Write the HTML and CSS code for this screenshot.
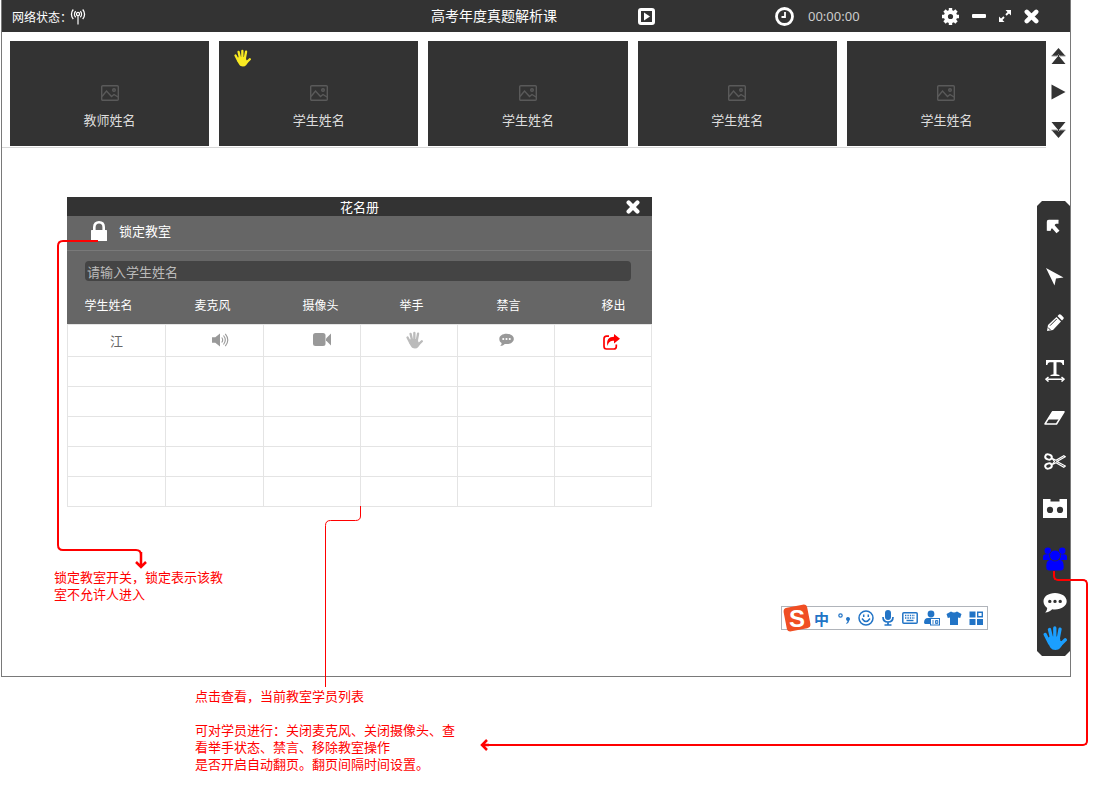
FILE: index.html
```html
<!DOCTYPE html>
<html lang="zh-CN">
<head>
<meta charset="utf-8">
<meta name="viewport" content="width=device-width, initial-scale=1">
<title>高考年度真题解析课</title>
<link rel="stylesheet" href="styles.css">
</head>
<body>
<svg class="sprite" aria-hidden="true">
  <symbol id="picture" viewBox="0 0 18 16">
    <g fill="none" stroke="currentColor" stroke-width="1.4">
      <rect x=".7" y=".7" width="16.6" height="14.6" rx="1"/>
      <path d="M1 11.5 5.5 6l5 5.5 2.5-2 4 2.5"/>
      <circle cx="13" cy="5" r="1.3"/>
    </g>
  </symbol>
  <symbol id="hand" viewBox="0 0 24 24">
    <path d="M2.200 8.500 6.500 17M6.500 3.500 9 14M11.800 2v12M17 3.200 15 14M22.300 13.800 17 19" fill="none" stroke="currentColor" stroke-width="3.300" stroke-linecap="round"/>
    <path d="M4 12.500 7 10.500h9.700l.8 4.500 2.700.500C19 21 16.500 24 12.500 24 8 24 6 21 4 12.500z" fill="currentColor"/>
  </symbol>
  <symbol id="cross" viewBox="0 0 14 14">
    <path d="M2.600 2.600l8.800 8.800M11.400 2.600l-8.800 8.800" stroke="currentColor" stroke-width="4.200" stroke-linecap="round"/>
  </symbol>
  <symbol id="speech" viewBox="0 0 24 20">
    <path fill="currentColor" fill-rule="evenodd" d="M12 0c6.600 0 11.700 3.600 11.700 8.200S18.600 16.400 12 16.400c-1 0-1.900 0-2.800-.2C7.500 18.200 5 19.200 2 19.600c1.300-1.200 2-2.500 2.200-4.700C1.800 13.300.500 11 .500 8.200.500 3.600 5.400 0 12 0zM6.800 6.700a1.700 1.700 0 1 0 0 3.400 1.700 1.700 0 0 0 0-3.400zm5.200 0a1.700 1.700 0 1 0 0 3.400 1.700 1.700 0 0 0 0-3.400zm5.200 0a1.700 1.700 0 1 0 0 3.400 1.700 1.700 0 0 0 0-3.400z"/>
  </symbol>
</svg>

<div class="page">
  <main class="board">
    <header class="topbar">
      <div class="status">网络状态：<svg class="signal" width="16" height="17" viewBox="0 0 16 17" fill="none" stroke="currentColor" stroke-width="1.300"><path d="M3.300 1.500a7 7 0 0 0 0 9.500M12.700 1.500a7 7 0 0 1 0 9.500M5.700 3.200a4.300 4.300 0 0 0 0 6M10.300 3.200a4.300 4.300 0 0 1 0 6"/><circle cx="8" cy="6" r="1.600"/><path d="M8 8v8.500" stroke="#aaa" stroke-width="2"/></svg></div>
      <h1 class="title">高考年度真题解析课</h1>
      <div class="playback"><button class="plain" type="button" aria-label="播放"><svg width="17" height="17" viewBox="0 0 17 17"><rect x="1.500" y="1.500" width="14" height="14" rx="1.500" fill="none" stroke="currentColor" stroke-width="3"/><path d="M6 4.500v8l6-4z" fill="currentColor"/></svg></button></div>
      <div class="clock-area">
        <div class="clock"><svg width="19" height="19" viewBox="0 0 19 19" fill="none" stroke="currentColor"><circle cx="9.500" cy="9.500" r="8" stroke-width="2.800"/><path d="M10 5v5H6.500" stroke-width="1.800"/></svg><time>00:00:00</time></div>
        <div class="window-controls">
          <button class="plain" type="button" aria-label="设置"><svg width="17" height="17" viewBox="0 0 17 17" fill="none" stroke="currentColor"><circle cx="8.500" cy="8.500" r="4.600" stroke-width="4"/><path d="M8.500 0v3M8.500 14v3M0 8.500h3M14 8.500h3M2.500 2.500l2.200 2.200M12.300 12.300l2.200 2.200M14.500 2.500l-2.200 2.200M4.700 12.300l-2.200 2.200" stroke-width="3.400"/></svg></button>
          <button class="plain" type="button" aria-label="最小化"><svg width="14" height="14" viewBox="0 0 14 14"><rect y="5" width="14" height="4" rx="1" fill="currentColor"/></svg></button>
          <button class="plain" type="button" aria-label="最大化"><svg width="12" height="12" viewBox="0 0 12 12"><path d="M6.500 0H12v5.500zM0 6.500V12h5.500z" fill="currentColor"/><path d="M10 2 7 5M5 7l-3 3" stroke="currentColor" stroke-width="1.800"/></svg></button>
          <button class="plain" type="button" aria-label="关闭"><svg width="15" height="15"><use href="#cross"/></svg></button>
        </div>
      </div>
    </header>

    <section class="strip">
      <ul class="videos">
        <li class="video"><svg class="thumb"><use href="#picture"/></svg><span>教师姓名</span></li>
        <li class="video"><svg class="raised"><use href="#hand"/></svg><svg class="thumb"><use href="#picture"/></svg><span>学生姓名</span></li>
        <li class="video"><svg class="thumb"><use href="#picture"/></svg><span>学生姓名</span></li>
        <li class="video"><svg class="thumb"><use href="#picture"/></svg><span>学生姓名</span></li>
        <li class="video"><svg class="thumb"><use href="#picture"/></svg><span>学生姓名</span></li>
      </ul>
      <nav class="pager">
        <button class="plain" type="button" aria-label="上一页"><svg width="15" height="16" viewBox="0 0 15 16" fill="currentColor"><path d="M7.500 0 14.500 8H.500zM7.500 7.500 14.500 16H.500z"/><path d="M.500 8H6l1.500-1.500L9 8h5.500" fill="none" stroke="#999"/></svg></button>
        <button class="plain" type="button" aria-label="自动翻页"><svg width="15" height="16" viewBox="0 0 15 16" fill="currentColor"><path d="M.500.500v15l14-7.500z"/></svg></button>
        <button class="plain" type="button" aria-label="下一页"><svg width="15" height="16" viewBox="0 0 15 16" fill="currentColor"><path d="M.500 0h14l-7 8.500zM.500 8h14l-7 8z"/><path d="M.500 8H6l1.500 1.500L9 8h5.500" fill="none" stroke="#999"/></svg></button>
      </nav>
    </section>

    <div class="stage">
      <div class="content">
        <section class="roster">
          <header class="roster-title"><h2>花名册</h2><button class="plain" type="button" aria-label="关闭花名册"><svg width="14" height="14"><use href="#cross"/></svg></button></header>
          <button class="lock" type="button"><svg width="16" height="20" viewBox="0 0 16 20"><path d="M3.300 10V6.200C3.300 3 5.300 1.300 8 1.300s4.700 1.700 4.700 4.900V10" fill="none" stroke="currentColor" stroke-width="2.600"/><rect y="9" width="16" height="11" rx=".500" fill="currentColor"/></svg>锁定教室</button>
          <div class="search"><input type="text" aria-label="学生姓名" placeholder="请输入学生姓名"></div>
          <table>
            <colgroup><col class="wide"><col class="wide"><col><col><col><col></colgroup>
            <thead><tr><th class="name">学生姓名</th><th class="mic">麦克风</th><th>摄像头</th><th>举手</th><th>禁言</th><th class="remove">移出</th></tr></thead>
            <tbody>
              <tr class="student">
                <td>江</td>
                <td><button class="plain sound" type="button" aria-label="麦克风"><svg width="17" height="14" viewBox="0 0 17 14"><path d="M0 4.300h3.300L8 .500v13L3.300 9.700H0z" fill="currentColor"/><path d="M9.700 4.500q2 2.500 0 5M11.500 2.500q3.600 4.500 0 9M13.300.800q5 6.200 0 12.400" fill="none" stroke="currentColor" stroke-width="1.100"/></svg></button></td>
                <td><button class="plain camera" type="button" aria-label="摄像头"><svg width="18" height="14" viewBox="0 0 18 14" fill="currentColor"><rect width="12.500" height="13" rx="2.500"/><path d="M13 5.500 18 .500v12l-5-5z"/></svg></button></td>
                <td><button class="plain hand" type="button" aria-label="举手"><svg width="17" height="18"><use href="#hand"/></svg></button></td>
                <td><button class="plain" type="button" aria-label="禁言"><svg width="15" height="14"><use href="#speech"/></svg></button></td>
                <td><button class="plain kick" type="button" aria-label="移出"><svg width="17" height="16" viewBox="0 0 17 16"><path d="M6 2.200H3.500Q1 2.200 1 4.700v7.600Q1 15 3.500 15h7.300q2.500 0 2.500-2.500v-2" fill="none" stroke="currentColor" stroke-width="1.700"/><path d="M11 0l6 4.700-6 4.700V6.700C7.500 6.700 5.500 8 4.500 12 3 6 6 2.800 11 2.800z" fill="currentColor"/></svg></button></td>
              </tr>
              <tr><td></td><td></td><td></td><td></td><td></td><td></td></tr>
              <tr><td></td><td></td><td></td><td></td><td></td><td></td></tr>
              <tr><td></td><td></td><td></td><td></td><td></td><td></td></tr>
              <tr><td></td><td></td><td></td><td></td><td></td><td></td></tr>
              <tr><td></td><td></td><td></td><td></td><td></td><td></td></tr>
            </tbody>
          </table>
        </section>
        <p class="note lock-note">锁定教室开关，锁定表示该教<br>室不允许人进入</p>
      </div>

      <nav class="tools">
        <button class="plain" type="button" aria-label="选择"><svg width="18" height="16" viewBox="0 0 18 16"><path d="M1.500 1.500h11L4 11.500H1.500z" fill="currentColor"/><path d="M12.500 2.800H2.800v9M4.500 4.500 12 13" fill="none" stroke="currentColor" stroke-width="4" stroke-linejoin="round"/></svg></button>
        <button class="plain" type="button" aria-label="指针"><svg width="19" height="19" viewBox="0 0 19 19"><path d="M1 1l17.500 9.500-7.500 1L9.500 18.500z" fill="currentColor"/></svg></button>
        <button class="plain" type="button" aria-label="画笔"><svg width="18" height="18" viewBox="0 0 18 18"><path d="M1 17l1-6L10.500 3 15 7.500 7 16z" fill="currentColor"/><path d="M11.500 2 13 .500q1-.700 2 .300l2.200 2.200q1 1 .200 2L16 6.500z" fill="currentColor"/><path d="M4 11.700 10.700 5M2 13.500 4.500 16" stroke="#333"/></svg></button>
        <button class="plain" type="button" aria-label="文字"><svg width="20" height="22" viewBox="0 0 20 22"><path d="M1 0h18v5h-1.300q-.300-2.700-2.400-2.700h-3.800v12l3 .700v1h-9v-1l3-.700v-12H4.700Q2.600 2.300 2.300 5H1z" fill="currentColor"/><path d="M2.500 19.200h15M3.500 17 1 19.200l2.500 2.300M16.500 17l2.500 2.200-2.500 2.300" stroke="currentColor" stroke-width="1.500" fill="none"/></svg></button>
        <button class="plain" type="button" aria-label="橡皮擦"><svg width="21" height="14" viewBox="0 0 21 14"><path d="M8.500.800h11.500L12.500 13H1z" fill="none" stroke="currentColor" stroke-width="1.500" stroke-linejoin="round"/><path d="M8.500.500H20l-4.800 8H3.500z" fill="currentColor"/></svg></button>
        <button class="plain" type="button" aria-label="剪切"><svg width="22" height="17" viewBox="0 0 22 17" fill="none" stroke="currentColor"><ellipse cx="4.500" cy="4" rx="3.300" ry="2.500" stroke-width="2" transform="rotate(18 4.500 4)"/><ellipse cx="4.500" cy="13" rx="3.300" ry="2.500" stroke-width="2" transform="rotate(-18 4.500 13)"/><path d="M8 5.300l4 2 7.800-4.500 1.500 1L13 8.500l8.300 4.500-1.500 1.200L12 9.700l-4 2M8 5.300l2.500 3.200-2.500 3.200" stroke-width="1.200"/></svg></button>
        <button class="plain" type="button" aria-label="工具箱"><svg width="24" height="20" viewBox="0 0 24 20"><path fill="currentColor" fill-rule="evenodd" d="M0 1h7.500v2.500h9V1H24v19H0zM7 8.800a3.100 3.100 0 1 0 0 6.200 3.100 3.100 0 0 0 0-6.200zm10 0a3.100 3.100 0 1 0 0 6.200 3.100 3.100 0 0 0 0-6.200z"/></svg></button>
        <button class="plain users" type="button" aria-label="花名册"><svg width="24" height="24" viewBox="0 0 24 24" fill="currentColor"><circle cx="4.800" cy="3.700" r="3.300"/><circle cx="19.200" cy="3.700" r="3.300"/><path d="M0 13V10q0-2.700 3-2.700h4V13zM24 13V10q0-2.700-3-2.700h-4V13z"/><path d="M3.300 20c0-4.500 1-7 4.200-7h9c3.200 0 4.200 2.500 4.200 7 0 2.300-.7 3.500-3 3.500H6.300c-2.300 0-3-1.200-3-3.500z"/><circle cx="12" cy="8.500" r="5.500" stroke="#333" stroke-width=".800"/></svg></button>
        <button class="plain" type="button" aria-label="聊天"><svg width="24" height="20"><use href="#speech"/></svg></button>
        <button class="plain wave" type="button" aria-label="举手"><svg width="24" height="24"><use href="#hand"/></svg></button>
      </nav>
    </div>
  </main>

  <div class="note list-note">
    <p>点击查看，当前教室学员列表</p>
    <p>可对学员进行：关闭麦克风、关闭摄像头、查<br>看举手状态、禁言、移除教室操作<br>是否开启自动翻页。翻页间隔时间设置。</p>
  </div>

  <div class="ime">
    <svg class="ime-logo" width="30" height="30" viewBox="0 0 30 30"><rect x="3" y="3" width="24" height="24" rx="4" fill="#f04e23" transform="rotate(-11 15 15)"/><text x="15" y="24" text-anchor="middle">S</text></svg>
    <span class="ime-lang">中</span>
    <svg width="16" height="16" viewBox="0 0 16 16"><circle cx="4.500" cy="5.500" r="1.700" fill="none" stroke="currentColor" stroke-width="1.200"/><path d="M10 9a2 2 0 1 1 3.300 1.600Q13 13 10.300 14v-1q1.200-.700 1.200-2Q10 10.700 10 9z" fill="currentColor"/></svg>
    <svg width="16" height="16" viewBox="0 0 16 16" fill="none" stroke="currentColor" stroke-width="1.500"><circle cx="8" cy="8" r="7"/><path d="M4 8.500q4 6 8 0M5.700 4.500V7M10.300 4.500V7"/></svg>
    <svg width="16" height="16" viewBox="0 0 16 16"><rect x="5" width="6" height="10" rx="3" fill="currentColor"/><path d="M3 7q0 5 5 5t5-5M8 12v3M4.500 15h7" fill="none" stroke="currentColor" stroke-width="1.700"/></svg>
    <svg width="16" height="16" viewBox="0 0 16 16" fill="none" stroke="currentColor"><rect x=".800" y="2.800" width="14.400" height="10.400" rx="1" stroke-width="1.500"/><path d="M3 5.500h10M3 8h10" stroke-width="1.400" stroke-dasharray="1.400 1"/><path d="M4.500 10.500h7" stroke-width="1.400"/></svg>
    <svg width="16" height="16" viewBox="0 0 16 16"><circle cx="7" cy="4" r="3.400" fill="currentColor"/><path d="M0 13q0-5 4-5h6v6H1z" fill="currentColor"/><rect x="6.500" y="8.500" width="9" height="6.500" fill="#fff" stroke="currentColor"/><path d="M9 10v4M11.500 10.500h2.300v3h-2.300zM11.500 12h2.300" stroke="currentColor" stroke-width=".900" fill="none"/></svg>
    <svg width="16" height="16" viewBox="0 0 16 16"><path d="M5 1.500q3 2 6 0l4.500 2.500-1.300 4-2.200-.500V15H4V7.500L1.800 8 .500 4z" fill="currentColor"/></svg>
    <svg width="16" height="16" viewBox="0 0 16 16"><path d="M1.500 1.500h6v6h-6zM1.500 9h6v6h-6zM9 9h6v6H9z" fill="currentColor"/><path d="M9.700 2.200h4.600v4.600H9.700z" fill="none" stroke="currentColor" stroke-width="1.400"/></svg>
  </div>

  <svg class="line lock-line" width="92" height="334" viewBox="0 0 92 334" aria-hidden="true"><path d="M48 4H13q-5 0-5 5v299q0 5 5 5h73q5 0 5 5" stroke-width="2"/></svg>
  <svg class="line lock-arrow" width="14" height="18" viewBox="0 0 14 18" aria-hidden="true"><path d="M7 0v14M2 10l5 5 5-5" stroke-width="2.500"/></svg>
  <svg class="line table-line" width="38" height="182" viewBox="0 0 38 182" aria-hidden="true"><path d="M36.500 0v10q0 4.500-5 4.500h-25q-5 0-5 5V181"/></svg>
  <div class="wire wire-drop"></div>
  <div class="wire wire-corner"></div>
  <div class="wire wire-run"></div>
  <svg class="line run-arrow" width="10" height="12" viewBox="0 0 10 12" aria-hidden="true"><path d="M8 1 3 6l5 5M3 6h7" stroke-width="2.500"/></svg>
</div>
</body>
</html>
```
FILE: styles.css
```css
* { box-sizing: border-box; }

body {
  margin: 0;
  background: #fff;
  color: #333;
  font-family: "Noto Sans CJK SC", sans-serif;
  font-size: 13px;
  line-height: 17px;
}

h1, h2, p, ul { margin: 0; padding: 0; }
svg { display: block; flex: none; }
.sprite { position: absolute; width: 0; height: 0; }

.plain {
  display: inline-flex;
  align-items: center;
  justify-content: center;
  padding: 0;
  border: 0;
  background: none;
  color: inherit;
  cursor: pointer;
}

.page { position: relative; }

.board {
  margin: 0 26px 0 1px;
  border: 1px solid #797979;
  border-top: 0;
}

/* Top bar */
.topbar {
  display: grid;
  grid-template-columns: 429fr 207fr 137fr 295fr;
  align-items: center;
  height: 32px;
  background: #333;
  color: #fff;
}
.status {
  display: flex;
  align-items: center;
  padding-left: 10px;
  font-size: 12px;
}
.signal { margin-left: -2px; }
.title { font-size: 14px; font-weight: 400; line-height: 20px; padding-bottom: 2px; }
.playback, .clock-area, .clock, .window-controls { display: flex; align-items: center; }
.clock-area { justify-content: space-between; padding-right: 31px; }
.clock { gap: 14px; color: #fff; }
.clock time { color: #ccc; font-family: "Noto Sans", sans-serif; }
.window-controls { gap: 13px; }

/* Video strip */
.strip { display: flex; }
.videos {
  flex: 1;
  display: grid;
  grid-template-columns: repeat(5, 1fr);
  gap: 10px;
  padding: 9px 0 1px 8px;
  border-bottom: 1px solid #d7d7d7;
  list-style: none;
}
.video {
  position: relative;
  display: flex;
  flex-direction: column;
  align-items: center;
  gap: 10px;
  height: 105px;
  padding-top: 44px;
  background: #333;
  color: #ddd;
}
.thumb { width: 18px; height: 16px; color: #5a5a5a; }
.raised {
  position: absolute;
  top: 8px;
  left: 15px;
  width: 17px;
  height: 18px;
  color: #f9ea22;
}
.pager {
  display: grid;
  grid-template-rows: 32px 40px 36px;
  width: 24px;
  padding-top: 8px;
}

/* Stage */
.stage { display: flex; padding: 49px 0 20px 52px; }
.content { flex: 1; }

.roster { max-width: 585px; margin-left: 13px; background: #666; color: #fff; }
.roster-title {
  display: grid;
  grid-template-columns: 1fr auto 1fr;
  align-items: center;
  height: 19px;
  padding: 0 12px;
  background: #333;
}
.roster-title h2 { grid-column: 2; font-size: 13px; font-weight: 400; }
.roster-title button { justify-self: end; }
.lock {
  display: flex;
  align-items: center;
  gap: 12px;
  width: 100%;
  height: 35px;
  padding: 0 24px 5px;
  border: 0;
  border-bottom: 1px solid #797979;
  background: none;
  color: #fff;
  font: inherit;
  text-align: left;
}
.search { padding: 10px 21px 0 18px; }
.search input {
  display: block;
  width: 100%;
  height: 20px;
  padding: 0 2px;
  border: 0;
  border-radius: 4px;
  background: #444;
  color: #fff;
  font: inherit;
}
.search input::placeholder { color: #bbb; opacity: 1; }

table {
  width: 100%;
  border-collapse: collapse;
  table-layout: fixed;
  color: #666;
}
.wide { width: 98px; }
th {
  height: 43px;
  padding: 5px 0 0 39px;
  background: #666;
  color: #fff;
  font-size: 12px;
  font-weight: 400;
  text-align: left;
}
th.name { padding-left: 17px; }
th.mic { padding-left: 29px; }
th.remove { padding-left: 47px; }
td {
  height: 30px;
  padding: 0;
  border: 1px solid #e4e4e4;
  background: #fff;
  text-align: center;
}
.student td { height: 32px; }
.student .plain { display: flex; margin: 0 auto; color: #999; }
.student .sound { padding-left: 12px; }
.student .camera { padding-left: 20px; }
.student .hand { padding-left: 10px; color: #bbb; }
.student .kick { padding: 4px 0 0 16px; color: #f00; }

.note { color: #f00; }
.lock-note { margin-top: 61px; }
.list-note {
  display: grid;
  gap: 17px;
  padding: 10px 0 10px 195px;
}

/* Tool column */
.tools {
  display: grid;
  grid-template-rows: 48px 50px 44px 52px 42px 44px 50px 52px 36px 34px;
  width: 33px;
  margin-top: 4px;
  padding: 2px 0 1px 2px;
  background: #333;
  color: #fff;
  clip-path: polygon(5px 0, 28px 0, 100% 5px, 100% calc(100% - 5px), 28px 100%, 5px 100%, 0 calc(100% - 5px), 0 5px);
}
.users { color: #00f; }
.wave { color: #1b9fff; }

/* Floating input method bar */
.ime {
  position: absolute;
  top: 606px;
  right: 109px;
  display: flex;
  align-items: center;
  gap: 6px;
  height: 24px;
  padding: 0 3px 0 32px;
  border: 1px solid #b0b4ba;
  background: #fff;
  color: #2274c6;
}
.ime-logo { position: absolute; top: -4px; left: 0; }
.ime-logo text {
  fill: #fff;
  font: 700 24px "Liberation Sans", sans-serif;
}
.ime-lang { width: 16px; font-size: 15px; font-weight: 700; }

/* Callout lines */
.line {
  position: absolute;
  fill: none;
  stroke: #f00;
  pointer-events: none;
}
.lock-line { top: 237px; left: 50px; }
.lock-arrow { top: 552px; left: 134px; }
.table-line { top: 506px; left: 324px; }
.run-arrow { top: 739px; left: 479px; }
.wire { position: absolute; border: 0 solid #f00; pointer-events: none; }
.wire-drop {
  top: 571px;
  right: 27px;
  width: 17px;
  height: 10px;
  border-width: 0 0 2px 2px;
  border-bottom-left-radius: 5px;
}
.wire-corner {
  top: 579px;
  right: 9px;
  width: 18px;
  height: 61px;
  border-width: 2px 2px 0 0;
  border-top-right-radius: 5px;
}
.wire-run {
  top: 640px;
  right: 9px;
  left: 484px;
  height: 106px;
  border-width: 0 2px 2px 0;
  border-bottom-right-radius: 5px;
}
```
